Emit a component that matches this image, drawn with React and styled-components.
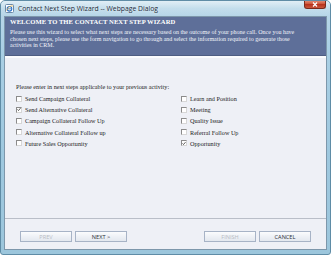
import React from "react";
import styled, { createGlobalStyle } from "styled-components";

const Global = createGlobalStyle`
  html, body { margin: 0; padding: 0; background: #ffffff; }
  * { box-sizing: border-box; }
`;

const Window = styled.div`
  width: 331px;
  height: 255px;
  display: flex;
  flex-direction: column;
  background: linear-gradient(180deg, #bcd9ea 0%, #a9cfe4 20%, #9ec8df 60%, #9cc6dc 100%);
  border: 1px solid #5f8ca6;
  border-radius: 5px 5px 3px 3px;
  overflow: hidden;
  position: relative;
`;

const TitleBar = styled.div`
  height: 15px;
  flex: none;
  display: flex;
  align-items: center;
  gap: 4px;
  padding-left: 4px;
  background: linear-gradient(180deg, rgba(255,255,255,0.55) 0%, rgba(255,255,255,0.15) 50%, rgba(255,255,255,0) 100%);
`;

const TitleIcon = styled.svg`
  width: 9px;
  height: 9px;
  flex: none;
`;

const TitleText = styled.span`
  font-family: "Open Sans", "Noto Sans", sans-serif;
  font-size: 6.8px;
  color: #1d2c3b;
  white-space: nowrap;
  text-shadow: 0 0 3px rgba(255,255,255,0.9);
`;

const CloseButton = styled.div`
  position: absolute;
  top: -1px;
  right: 4px;
  width: 22px;
  height: 9px;
  border: 1px solid #7a2a1d;
  border-top: none;
  border-radius: 0 0 3px 3px;
  background: linear-gradient(180deg, #e69a86 0%, #d05a3f 45%, #b8321c 55%, #c9563c 100%);
  display: flex;
  align-items: center;
  justify-content: center;
`;

const Client = styled.div`
  flex: 1;
  margin: 0 3px 4px 3px;
  display: flex;
  flex-direction: column;
  background: #eef0f6;
  border: 1px solid #7d97ab;
`;

const Header = styled.div`
  height: 39px;
  flex: none;
  background: #5e6f99;
  padding: 1px 4px 0 5px;
  color: #ffffff;
  font-family: "Liberation Serif", "Times New Roman", serif;
  border-bottom: 1px solid #4e5d82;
`;

const HeaderTitle = styled.div`
  font-weight: bold;
  font-size: 6.6px;
  line-height: 8px;
  letter-spacing: 0.05px;
`;

const HeaderText = styled.div`
  font-size: 6px;
  line-height: 6.7px;
  margin-top: 3px;
  color: #f2f4f9;
  white-space: nowrap;
`;

const Body = styled.div`
  flex: 1;
  padding: 25px 0 0 11px;
  font-family: "Liberation Serif", "Times New Roman", serif;
  color: #1c1c1c;
  border-top: 2px solid #fafbfd;
`;

const Prompt = styled.div`
  font-size: 6.2px;
  line-height: 8px;
  margin-bottom: 2px;
`;

const Columns = styled.div`
  display: grid;
  grid-template-columns: 165px 1fr;
`;

const Column = styled.div`
  display: flex;
  flex-direction: column;
`;

const Row = styled.label`
  height: 11.2px;
  display: flex;
  align-items: center;
  gap: 3px;
  font-size: 6.2px;
  white-space: nowrap;
`;

const Box = styled.span`
  width: 6px;
  height: 6px;
  flex: none;
  background: #ffffff;
  border: 1px solid #8b8b8b;
  border-right-color: #d6d6d6;
  border-bottom-color: #d6d6d6;
  display: flex;
  align-items: center;
  justify-content: center;
`;

const Footer = styled.div`
  height: 31px;
  flex: none;
  border-top: 1px solid #b9bec8;
  display: flex;
  align-items: flex-start;
  padding: 12px 15px 0 15px;
`;

const ButtonGroup = styled.div`
  display: flex;
  gap: 3px;
`;

const Spacer = styled.div`
  flex: 1;
`;

const Button = styled.div`
  width: 52px;
  height: 11px;
  display: flex;
  align-items: center;
  justify-content: center;
  border: 1px solid #a7b3c6;
  background: linear-gradient(180deg, #fbfcfd 0%, #eef1f6 50%, #e3e8ef 100%);
  font-family: "Open Sans", "Noto Sans", sans-serif;
  font-size: 5.6px;
  color: ${(p) => (p.$disabled ? "#b8bcc4" : "#2a2f38")};
`;

const Check = ({ checked }) => (
  <Box>
    {checked && (
      <svg width="5" height="5" viewBox="0 0 5 5">
        <path d="M0.6 2.4 L1.9 3.8 L4.4 0.8" fill="none" stroke="#222" strokeWidth="0.9" />
      </svg>
    )}
  </Box>
);

const left = [
  ["Send Campaign Collateral", false],
  ["Send Alternative Collateral", true],
  ["Campaign Collateral Follow Up", false],
  ["Alternative Collateral Follow up", false],
  ["Future Sales Opportunity", false],
];
const right = [
  ["Learn and Position", false],
  ["Meeting", false],
  ["Quality Issue", false],
  ["Referral Follow Up", false],
  ["Opportunity", true],
];

export default function App() {
  return (
    <>
      <Global />
      <Window>
        <TitleBar>
          <TitleIcon viewBox="0 0 9 9">
            <rect x="0.5" y="0.5" width="8" height="8" rx="1" fill="#ffffff" stroke="#6c8aa8" />
            <circle cx="4.5" cy="4.8" r="2.3" fill="none" stroke="#2f74c8" strokeWidth="1.1" />
            <path d="M2.6 4.8 H6.4" stroke="#2f74c8" strokeWidth="0.8" />
            <path d="M1.5 6.5 Q4.5 1 8 2" fill="none" stroke="#e3a72f" strokeWidth="0.7" />
          </TitleIcon>
          <TitleText>Contact Next Step Wizard -- Webpage Dialog</TitleText>
        </TitleBar>
        <CloseButton>
          <svg width="6" height="5" viewBox="0 0 6 5">
            <path d="M1 0.5 L5 4.5 M5 0.5 L1 4.5" stroke="#ffffff" strokeWidth="1.2" />
          </svg>
        </CloseButton>
        <Client>
          <Header>
            <HeaderTitle>WELCOME TO THE CONTACT NEXT STEP WIZARD</HeaderTitle>
            <HeaderText>
              Please use this wizard to select what next steps are necessary based on the outcome of your phone call. Once you have
              <br />
              chosen next steps, please use the form navigation to go through and select the information required to generate those
              <br />
              activities in CRM.
            </HeaderText>
          </Header>
          <Body>
            <Prompt>Please enter in next steps applicable to your previous activity:</Prompt>
            <Columns>
              <Column>
                {left.map(([t, c]) => (
                  <Row key={t}>
                    <Check checked={c} />
                    {t}
                  </Row>
                ))}
              </Column>
              <Column>
                {right.map(([t, c]) => (
                  <Row key={t}>
                    <Check checked={c} />
                    {t}
                  </Row>
                ))}
              </Column>
            </Columns>
          </Body>
          <Footer>
            <ButtonGroup>
              <Button $disabled>PREV</Button>
              <Button>NEXT &gt;</Button>
            </ButtonGroup>
            <Spacer />
            <ButtonGroup>
              <Button $disabled>FINISH</Button>
              <Button>CANCEL</Button>
            </ButtonGroup>
          </Footer>
        </Client>
      </Window>
    </>
  );
}
